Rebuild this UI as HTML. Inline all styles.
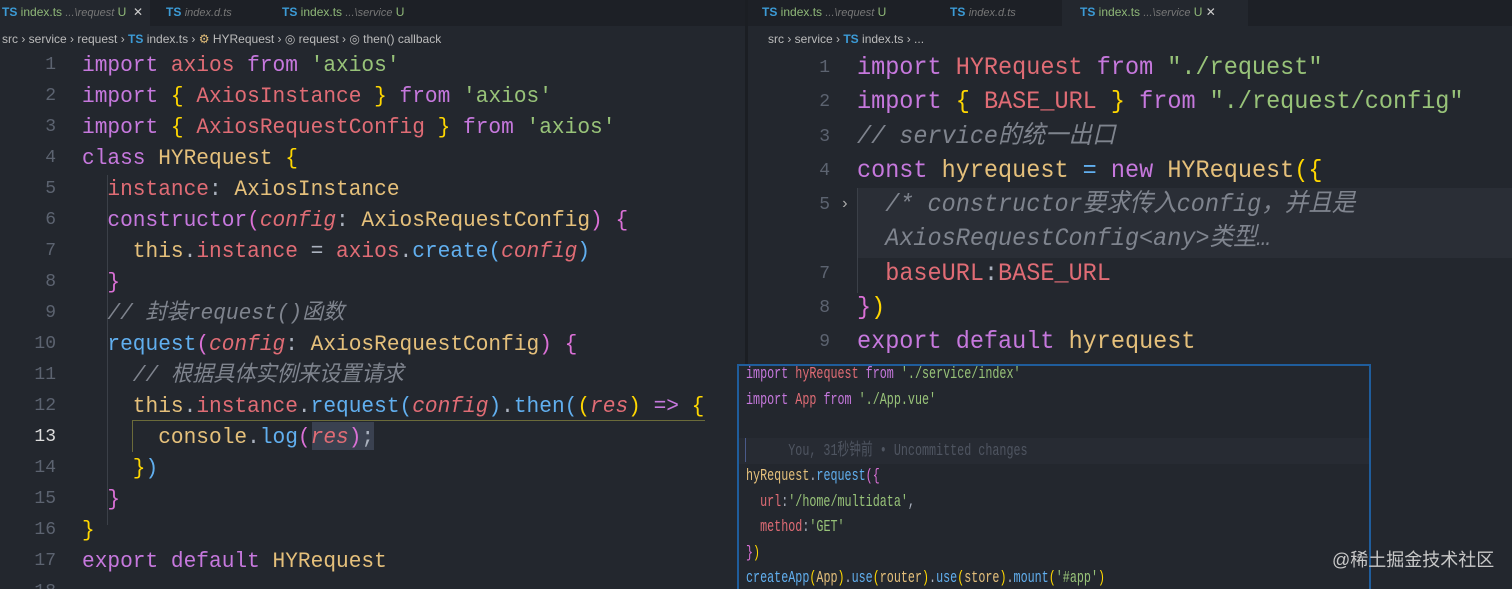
<!DOCTYPE html>
<html><head><meta charset="utf-8"><style>
*{margin:0;padding:0;box-sizing:border-box}
html,body{width:1512px;height:589px;overflow:hidden}
body{background:#23272e;position:relative;font-family:"Liberation Mono","Noto Sans CJK SC",monospace}
.abs{position:absolute;white-space:pre}
.tabs{position:absolute;top:0;height:26px;background:#1d2026}
.tab{position:absolute;top:0;height:26px;font:12px "Liberation Sans",sans-serif;line-height:24px;color:#8fb878;white-space:pre}
.tab b{color:#3c9bd6;font-weight:bold}
.tab i{color:#777;font-size:11px}
.crumb{font:12px "Liberation Sans",sans-serif;color:#bbb}
.crumb b{color:#3c9bd6}
.L{font-size:22px;line-height:31px;color:#abb2bf;transform:scaleX(0.962);transform-origin:0 0}
.R{font-size:25px;line-height:34.25px;color:#abb2bf;transform:scaleX(0.94);transform-origin:0 0}
.P{font-size:17px;line-height:25.5px;color:#abb2bf;transform:scaleX(0.69);transform-origin:0 0}
.n{color:#5c6370;text-align:right;font-size:18px;transform:none}
.k{color:#c678dd}.v{color:#e06c75}.s{color:#98c379}.y{color:#e5c07b}.g{color:#ffd700}.f{color:#61afef}.c{color:#7f848e;font-style:italic}.p{color:#da70d6}
</style></head><body>
<div class="tabs" style="left:0;width:745px"></div>
<div class="abs" style="left:0;top:0;width:150px;height:26px;background:#23272e"></div>
<div class="tab" style="left:2px"><b>TS</b> index.ts <i>...\request</i> U  <span style="color:#ccc">✕</span></div>
<div class="tab" style="left:166px"><b>TS</b> <i style="font-style:italic">index.d.ts</i></div>
<div class="tab" style="left:282px"><b>TS</b> index.ts <i>...\service</i> U</div>
<div class="abs crumb" style="left:2px;top:32px">src › service › request › <b>TS</b> index.ts › <span style="color:#e5c07b">⚙</span> HYRequest › ◎ request › ◎ then() callback</div>

<div class="abs" style="left:745px;top:0;width:3px;height:589px;background:#1b1e23"></div>
<div class="tabs" style="left:748px;width:764px"></div>
<div class="abs" style="left:1062px;top:0;width:186px;height:26px;background:#23272e"></div>
<div class="tab" style="left:762px"><b>TS</b> index.ts <i>...\request</i> U</div>
<div class="tab" style="left:950px"><b>TS</b> <i style="font-style:italic">index.d.ts</i></div>
<div class="tab" style="left:1080px"><b>TS</b> index.ts <i>...\service</i> U <span style="color:#ccc">✕</span></div>
<div class="abs crumb" style="left:768px;top:32px">src › service › <b>TS</b> index.ts › ...</div>

<div class="abs L n" style="left:20px;top:50px;width:36px">1
2
3
4
5
6
7
8
9
10
11
12
<span style="color:#ddd">13</span>
14
15
16
17
18</div>
<div class="abs" style="left:107px;top:175px;width:1px;height:350px;background:#3b4048"></div>
<div class="abs" style="left:132px;top:420px;width:573px;height:1px;background:#6b6b3a"></div>
<div class="abs" style="left:132px;top:420px;width:1px;height:32px;background:#6b6b3a"></div>
<div class="abs" style="left:312px;top:422px;width:62px;height:28px;background:#3a4150"></div>
<div class="abs L" style="left:82px;top:50px"><span class="k">import</span> <span class="v">axios</span> <span class="k">from</span> <span class="s">'axios'</span>
<span class="k">import</span> <span class="g">{</span> <span class="v">AxiosInstance</span> <span class="g">}</span> <span class="k">from</span> <span class="s">'axios'</span>
<span class="k">import</span> <span class="g">{</span> <span class="v">AxiosRequestConfig</span> <span class="g">}</span> <span class="k">from</span> <span class="s">'axios'</span>
<span class="k">class</span> <span class="y">HYRequest</span> <span class="g">{</span>
  <span class="v">instance</span>: <span class="y">AxiosInstance</span>
  <span class="k">constructor</span><span class="p">(</span><span class="v" style="font-style:italic">config</span>: <span class="y">AxiosRequestConfig</span><span class="p">)</span> <span class="p">{</span>
    <span class="y">this</span>.<span class="v">instance</span> = <span class="v">axios</span>.<span class="f">create</span><span class="f">(</span><span class="v" style="font-style:italic">config</span><span class="f">)</span>
  <span class="p">}</span>
  <span class="c">// 封装request()函数</span>
  <span class="f">request</span><span class="p">(</span><span class="v" style="font-style:italic">config</span>: <span class="y">AxiosRequestConfig</span><span class="p">)</span> <span class="p">{</span>
    <span class="c">// 根据具体实例来设置请求</span>
    <span class="y">this</span>.<span class="v">instance</span>.<span class="f">request</span><span class="f">(</span><span class="v" style="font-style:italic">config</span><span class="f">)</span>.<span class="f">then</span><span class="f">(</span><span class="g">(</span><span class="v" style="font-style:italic">res</span><span class="g">)</span> <span class="k">=&gt;</span> <span class="g">{</span>
      <span class="y">console</span>.<span class="f">log</span><span class="p">(</span><span class="v" style="font-style:italic">res</span><span class="p">)</span>;
    <span class="g">}</span><span class="f">)</span>
  <span class="p">}</span>
<span class="g">}</span>
<span class="k">export</span> <span class="k">default</span> <span class="y">HYRequest</span></div>

<div class="abs" style="left:857px;top:188px;width:655px;height:70px;background:#2a2e36"></div>
<div class="abs" style="left:857px;top:188px;width:1px;height:105px;background:#3b4048"></div>
<div class="abs R n" style="left:790px;top:51px;width:40px">1
2
3
4
5
 
7
8
9</div>
<div class="abs" style="left:840px;top:195px;color:#aaa;font-size:16px">›</div>
<div class="abs R" style="left:857px;top:51px"><span class="k">import</span> <span class="v">HYRequest</span> <span class="k">from</span> <span class="s">"./request"</span>
<span class="k">import</span> <span class="g">{</span> <span class="v">BASE_URL</span> <span class="g">}</span> <span class="k">from</span> <span class="s">"./request/config"</span>
<span class="c">// service的统一出口</span>
<span class="k">const</span> <span class="y">hyrequest</span> <span class="f">=</span> <span class="k">new</span> <span class="y">HYRequest</span><span class="g">({</span>
  <span class="c">/* constructor要求传入config，并且是</span>
  <span class="c">AxiosRequestConfig&lt;any&gt;类型…</span>
  <span class="v">baseURL</span>:<span class="v">BASE_URL</span>
<span class="p">}</span><span class="g">)</span>
<span class="k">export</span> <span class="k">default</span> <span class="y">hyrequest</span></div>

<div class="abs" style="left:737px;top:364px;width:634px;height:230px;background:#23272e;border:2px solid #1f5d9c"></div>
<div class="abs" style="left:739px;top:438px;width:630px;height:26px;background:#272b33"></div>
<div class="abs" style="left:745px;top:438px;width:1px;height:24px;background:#4a5a8a"></div>
<div class="abs P" style="left:746px;top:362px"><span class="k">import</span> <span class="v">hyRequest</span> <span class="k">from</span> <span class="s">'./service/index'</span>
<span class="k">import</span> <span class="v">App</span> <span class="k">from</span> <span class="s">'./App.vue'</span>

      <span style="color:#4f5561">You, 31秒钟前 • Uncommitted changes</span>
<span class="y">hyRequest</span>.<span class="f">request</span><span class="p">({</span>
  <span class="v">url</span>:<span class="s">'/home/multidata'</span>,
  <span class="v">method</span>:<span class="s">'GET'</span>
<span class="p">}</span><span class="g">)</span>
<span class="f">createApp</span><span class="g">(</span><span class="y">App</span><span class="g">)</span>.<span class="f">use</span><span class="g">(</span><span class="y">router</span><span class="g">)</span>.<span class="f">use</span><span class="g">(</span><span class="y">store</span><span class="g">)</span>.<span class="f">mount</span><span class="g">(</span><span class="s">'#app'</span><span class="g">)</span></div>
<div class="abs" style="left:1332px;top:546px;font:18px 'Liberation Sans','Noto Sans CJK SC',sans-serif;color:#c8c8c8">@稀土掘金技术社区</div>
</body></html>
